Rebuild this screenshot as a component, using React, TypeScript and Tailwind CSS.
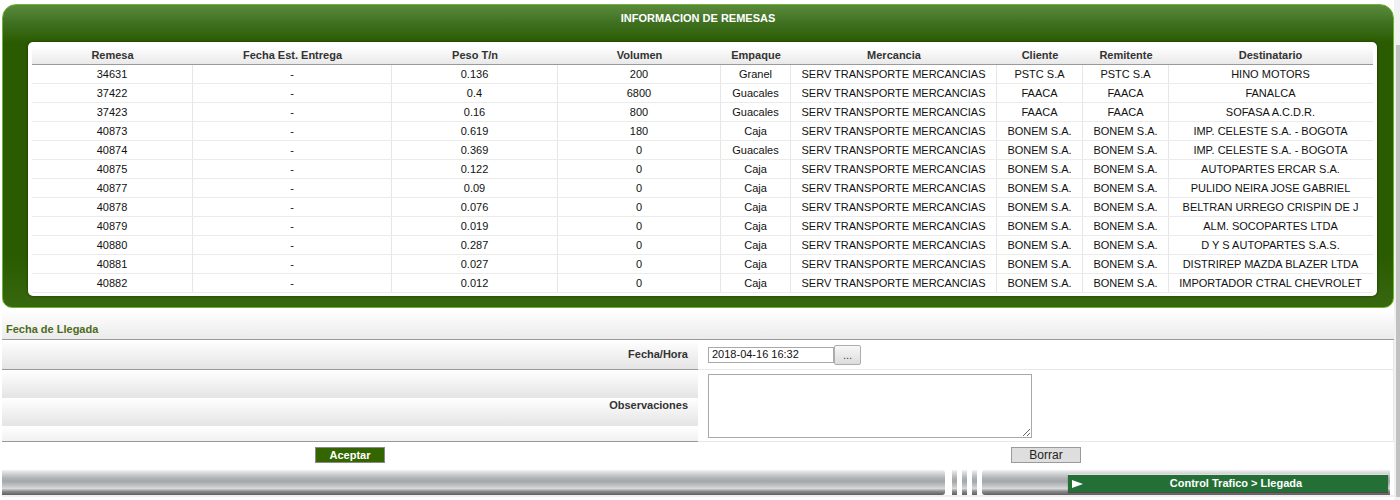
import React from "react";

const cols = "grid grid-cols-[161px_199px_166px_163px_70px_206px_86px_86px_203px]";

const headers = [
  "Remesa",
  "Fecha Est. Entrega",
  "Peso T/n",
  "Volumen",
  "Empaque",
  "Mercancia",
  "Cliente",
  "Remitente",
  "Destinatario",
];

const rows = [
  ["34631", "0.136", "200", "Granel", "PSTC S.A", "PSTC S.A", "HINO MOTORS"],
  ["37422", "0.4", "6800", "Guacales", "FAACA", "FAACA", "FANALCA"],
  ["37423", "0.16", "800", "Guacales", "FAACA", "FAACA", "SOFASA A.C.D.R."],
  ["40873", "0.619", "180", "Caja", "BONEM S.A.", "BONEM S.A.", "IMP. CELESTE S.A. - BOGOTA"],
  ["40874", "0.369", "0", "Guacales", "BONEM S.A.", "BONEM S.A.", "IMP. CELESTE S.A. - BOGOTA"],
  ["40875", "0.122", "0", "Caja", "BONEM S.A.", "BONEM S.A.", "AUTOPARTES ERCAR S.A."],
  ["40877", "0.09", "0", "Caja", "BONEM S.A.", "BONEM S.A.", "PULIDO NEIRA JOSE GABRIEL"],
  ["40878", "0.076", "0", "Caja", "BONEM S.A.", "BONEM S.A.", "BELTRAN URREGO CRISPIN DE J"],
  ["40879", "0.019", "0", "Caja", "BONEM S.A.", "BONEM S.A.", "ALM. SOCOPARTES LTDA"],
  ["40880", "0.287", "0", "Caja", "BONEM S.A.", "BONEM S.A.", "D Y S AUTOPARTES S.A.S."],
  ["40881", "0.027", "0", "Caja", "BONEM S.A.", "BONEM S.A.", "DISTRIREP MAZDA BLAZER LTDA"],
  ["40882", "0.012", "0", "Caja", "BONEM S.A.", "BONEM S.A.", "IMPORTADOR CTRAL CHEVROLET"],
];

const silver =
  "bg-[linear-gradient(to_bottom,#f2f2f2_0%,#d6d8da_12%,#b4b7ba_30%,#a3a7aa_45%,#bfc2c4_62%,#d8d8d8_74%,#8a8a8a_86%,#5e5e5e_100%)]";

export default function App() {
  return (
    <div className="flex w-[1400px] h-[500px] overflow-hidden bg-white font-['Liberation_Sans',Arial,sans-serif] text-[11px] text-[#111]">
      <div className="w-[1394px] pl-[2px] flex flex-col">
        {/* Remesas panel */}
        <div className="mt-[4px] h-[304px] rounded-t-[14px] rounded-b-[10px] border border-[#6db52e] bg-[linear-gradient(to_bottom,#5b8a3d_0px,#3f7020_18px,#2a5b00_38px,#2a5b00_250px,#37670f_100%)]">
          <div className="h-[37px] pt-[5px] text-center font-bold text-white">
            INFORMACION DE REMESAS
          </div>
          <div className="ml-[25px] mr-[16px] h-[254px] rounded-[5px] bg-white px-[4px] pt-[4px] pb-[3px] shadow-[0_0_3px_rgba(0,0,0,0.45)]">
            <div
              className={`${cols} h-[19px] border-b border-[#9a9a9a] bg-[linear-gradient(to_bottom,#ffffff,#e9e9e9)] font-bold text-[#333]`}
            >
              {headers.map((h) => (
                <div key={h} className="text-center leading-[18px]">
                  {h}
                </div>
              ))}
            </div>
            {rows.map((r) => {
              const cells = [r[0], "-", r[1], r[2], r[3], "SERV TRANSPORTE MERCANCIAS", r[4], r[5], r[6]];
              return (
                <div key={r[0]} className={`${cols} h-[19px] border-b border-[#ebebeb]`}>
                  {cells.map((c, i) => (
                    <div
                      key={i}
                      className={`text-center leading-[18px] whitespace-nowrap overflow-hidden ${
                        i < 8 ? "border-r border-[#e6e6e6]" : ""
                      }`}
                    >
                      {c}
                    </div>
                  ))}
                </div>
              );
            })}
          </div>
        </div>

        {/* Fecha de Llegada */}
        <div className="mt-[2px] h-[30px] border-b border-[#999] bg-[linear-gradient(to_bottom,#ffffff,#ebebeb)] pl-[4px] pt-[11px] font-bold text-[#4d6a1c]">
          Fecha de Llegada
        </div>

        <div className="grid grid-cols-[696px_1fr]">
          <div className="h-[30px] border-b border-[#999] bg-[linear-gradient(to_bottom,#ffffff,#e4e4e4)] flex items-center justify-end pr-[10px] font-bold text-[#333]">
            Fecha/Hora
          </div>
          <div className="h-[30px] border-b border-r border-[#e8e8e8] flex items-center pl-[10px]">
            <input
              readOnly
              value="2018-04-16 16:32"
              className="h-[16px] w-[126px] border border-[#a9a9a9] px-[3px] text-[11px] text-[#111] outline-none"
            />
            <button className="h-[20px] w-[27px] rounded-[2px] border border-[#adadad] bg-[linear-gradient(to_bottom,#f7f7f7,#dcdcdc)] text-[11px] leading-[14px] text-[#444]">
              ...
            </button>
          </div>

          <div className="h-[72px] border-b border-[#999] bg-[repeating-linear-gradient(to_bottom,#ffffff_0px,#e4e4e4_28px)] flex items-center justify-end pr-[10px] font-bold text-[#333]">
            Observaciones
          </div>
          <div className="h-[72px] border-b border-r border-[#e8e8e8] pl-[10px] pt-[4px]">
            <textarea className="block h-[64px] w-[324px] border border-[#a9a9a9] outline-none" />
          </div>

          <div className="h-[28px] flex justify-center pt-[5px]">
            <button className="h-[16px] w-[70px] border border-[#8a8a8a] bg-[#336600] text-[11px] font-bold leading-[13px] text-white">
              Aceptar
            </button>
          </div>
          <div className="h-[28px] flex justify-center pt-[5px]">
            <button className="h-[16px] w-[70px] border border-[#9a9a9a] bg-[#dedede] text-[12px] leading-[13px] text-[#222]">
              Borrar
            </button>
          </div>
        </div>

        {/* Bottom bar */}
        <div className="flex h-[25px]">
          <div className={`w-[943px] rounded-r-[3px] ${silver}`} />
          <div className={`ml-[7px] w-[5px] ${silver}`} />
          <div className={`ml-[5px] w-[5px] ${silver}`} />
          <div className={`ml-[5px] w-[5px] ${silver}`} />
          <div className={`ml-[5px] mr-[4px] flex-1 rounded-l-[3px] ${silver} pl-[86px] pt-[4px]`}>
            <div className="flex h-[18px] w-[320px] items-center border-t border-[#e0e0e0] bg-[#236f36] shadow-[0_1px_1px_rgba(0,0,0,0.4)]">
              <svg width="12" height="8" viewBox="0 0 12 8" className="ml-[4px]">
                <polygon points="0,0 11,4 0,8" fill="#ffffff" />
              </svg>
              <div className="flex-1 text-center text-[11px] font-bold text-white">
                Control Trafico &gt; Llegada
              </div>
            </div>
          </div>
        </div>
        <div className="h-[2px] bg-[#efefef]" />
      </div>

      {/* scrollbar */}
      <div className="w-[6px] bg-[#f1f1f1] pt-[45px]">
        <div className="ml-[2px] h-[452px] w-[4px] bg-[#c1c1c1]" />
      </div>
    </div>
  );
}
